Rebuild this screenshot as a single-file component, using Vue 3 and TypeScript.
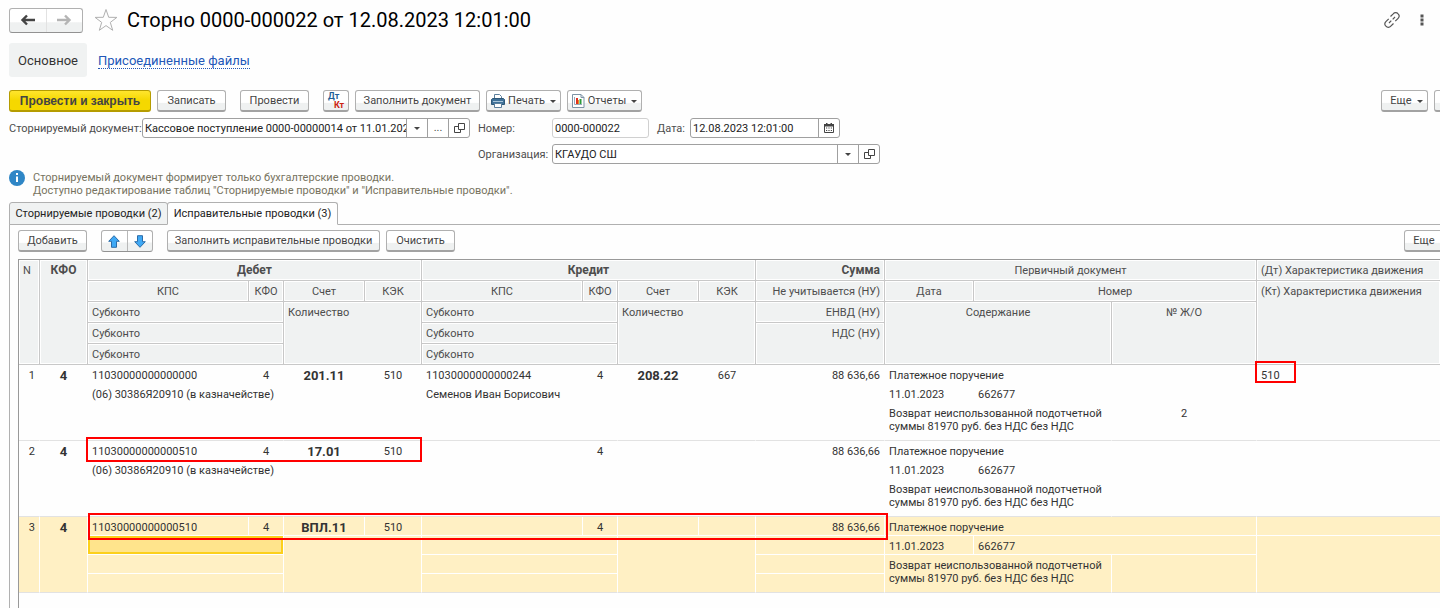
<script setup lang="ts">
import { ref } from 'vue'

interface Side {
  kps: string
  kfo: string
  account: string
  kek: string
  subconto: [string, string, string]
}

interface Entry {
  n: number
  kfo: string
  debit: Side
  credit: Side
  sum: string
  docKind: string
  docDate: string
  docNumber: string
  content: string
  journal: string
  feature: string
  selected: boolean
}

const treasury = '(06) 30386Я20910 (в казначействе)'
const purpose = 'Возврат неиспользованной подотчетной суммы 81970 руб. без НДС без НДС'
const doc = { sum: '88 636,66', docKind: 'Платежное поручение', docDate: '11.01.2023', docNumber: '662677', content: purpose }

const entries: Entry[] = [
  {
    n: 1, kfo: '4', ...doc, journal: '2', feature: '510', selected: false,
    debit: { kps: '11030000000000000', kfo: '4', account: '201.11', kek: '510', subconto: [treasury, '', ''] },
    credit: { kps: '11030000000000244', kfo: '4', account: '208.22', kek: '667', subconto: ['Семенов Иван Борисович', '', ''] },
  },
  {
    n: 2, kfo: '4', ...doc, journal: '', feature: '', selected: false,
    debit: { kps: '11030000000000510', kfo: '4', account: '17.01', kek: '510', subconto: [treasury, '', ''] },
    credit: { kps: '', kfo: '4', account: '', kek: '', subconto: ['', '', ''] },
  },
  {
    n: 3, kfo: '4', ...doc, journal: '', feature: '', selected: true,
    debit: { kps: '11030000000000510', kfo: '4', account: 'ВПЛ.11', kek: '510', subconto: ['', '', ''] },
    credit: { kps: '', kfo: '4', account: '', kek: '', subconto: ['', '', ''] },
  },
]

const source = ref('Кассовое поступление 0000-00000014 от 11.01.202')
const docNo = ref('0000-000022')
const docDate = ref('12.08.2023 12:01:00')
const org = ref('КГАУДО СШ')
</script>

<template>
  <main class="page">
    <header class="head">
      <div class="pair nav">
        <button type="button" aria-label="Назад">
          <svg width="16" height="12" viewBox="0 0 16 12"><path d="M7 1.500 2.500 6 7 10.500M2.500 6H15" fill="none" stroke="#444" stroke-width="2.400" /></svg>
        </button>
        <button type="button" aria-label="Вперед">
          <svg width="16" height="12" viewBox="0 0 16 12"><path d="M9 1.500l4.500 4.500L9 10.500M13.500 6H1" fill="none" stroke="#b4b4b4" stroke-width="2.400" /></svg>
        </button>
      </div>
      <button type="button" class="bare" aria-label="В избранное">
        <svg width="24" height="24" viewBox="0 0 24 24"><path d="M12 1.500l2.700 7.800 8.200.1-6.600 5 2.400 7.900L12 17.600l-6.700 4.700 2.400-7.900-6.600-5 8.200-.1z" fill="none" stroke="#b0b0b0" /></svg>
      </button>
      <h1>Сторно 0000-000022 от 12.08.2023 12:01:00</h1>
      <div class="tools">
        <button type="button" class="bare" aria-label="Ссылка">
          <svg width="18" height="18" viewBox="0 0 18 18" fill="none" stroke="#555" stroke-width="1.200"><path d="M7.500 5.500l2.700-2.700a3.200 3.200 0 0 1 4.900 0a3.200 3.200 0 0 1 0 4.500l-2.800 2.900M10.500 12.500l-2.700 2.700a3.200 3.200 0 0 1-4.900 0a3.200 3.200 0 0 1 0-4.500l2.800-2.900M6 12l2.300-2.300M9.700 8.300L12 6" /></svg>
        </button>
        <button type="button" class="bare" aria-label="Меню">
          <svg width="4" height="14" viewBox="0 0 4 14" fill="#555"><path d="M.5 1.500h3v3h-3zM.5 5.500h3v3h-3zM.5 9.500h3v3h-3z" /></svg>
        </button>
      </div>
    </header>

    <nav class="sections">
      <span class="current">Основное</span>
      <a href="#files">Присоединенные файлы</a>
    </nav>

    <div class="bar main-bar">
      <button type="button" class="btn primary">Провести и закрыть</button>
      <button type="button" class="btn short">Записать</button>
      <button type="button" class="btn short apart">Провести</button>
      <button type="button" class="btn apart dtkt"><span class="dt">Дт</span><span class="kt">Кт</span></button>
      <button type="button" class="btn fill-doc">Заполнить документ</button>
      <button type="button" class="btn menu">
        <svg width="14" height="14" viewBox="0 0 14 14"><path d="M3.500 5V.5h5l2 2V5" fill="#fff" stroke="#5b7f9c" /><path d="M1.500 4.500h11l1 1v5H.5v-5z" fill="#3f7199" stroke="#2f5878" /><path d="M2 7.500h10" stroke="#a9c6da" /><path d="M3.500 9.500h7v4h-7z" fill="#fff" stroke="#5b7f9c" /></svg>
        Печать<i class="caret"></i>
      </button>
      <button type="button" class="btn menu">
        <svg width="13" height="14" viewBox="0 0 13 14"><path d="M.5.5h8.500l3 3v10H.5z" fill="#fff" stroke="#7d93a5" /><path d="M9 .5v3h3" fill="none" stroke="#7d93a5" /><path d="M4 4h2v6H4z" fill="#e0301e" /><path d="M6 6h1v4H6z" fill="#f08a24" /><path d="M7.500 5h2v5h-2z" fill="#2a9a3a" /><path d="M2.500 3v7.500H10" fill="none" stroke="#9ab" /></svg>
        Отчеты<i class="caret"></i>
      </button>
      <div class="right">
        <button type="button" class="btn menu more">Еще<i class="caret"></i></button>
        <button type="button" class="btn help" aria-label="Справка"></button>
      </div>
    </div>

    <form class="fields" @submit.prevent>
      <label for="source">Сторнируемый документ:</label>
      <div class="combo">
        <input id="source" v-model="source" type="text">
        <button type="button" aria-label="Выбрать из списка"><i class="caret"></i></button>
        <button type="button">...</button>
        <button type="button" aria-label="Открыть">
          <svg width="11" height="11" viewBox="0 0 11 11" fill="none" stroke="#444"><path d="M4.500 .5h6v6h-6zM4.500 3.500h-4v6h6v-3" /></svg>
        </button>
      </div>
      <label for="number" class="second-label">Номер:</label>
      <div class="pack">
        <div class="combo number"><input id="number" v-model="docNo" type="text"></div>
        <label for="date">Дата:</label>
        <div class="combo date">
          <input id="date" v-model="docDate" type="text">
          <button type="button" aria-label="Календарь">
            <svg width="10" height="10" viewBox="0 0 10 10"><path d="M.5 1.500h9v8h-9z" fill="none" stroke="#444" /><path d="M0 1h10v2.500H0zM2 0h1.500v2H2zM6.500 0H8v2H6.500z" fill="#444" /><path d="M2 5h6M2 7.500h6" stroke="#444" stroke-dasharray="1.200 1.200" /></svg>
          </button>
        </div>
      </div>
      <label for="org" class="second-label org-label">Организация:</label>
      <div class="combo org">
        <input id="org" v-model="org" type="text">
        <button type="button" aria-label="Выбрать из списка"><i class="caret"></i></button>
        <button type="button" aria-label="Открыть">
          <svg width="11" height="11" viewBox="0 0 11 11" fill="none" stroke="#444"><path d="M4.500 .5h6v6h-6zM4.500 3.500h-4v6h6v-3" /></svg>
        </button>
      </div>
    </form>

    <div class="info">
      <svg width="16" height="16" viewBox="0 0 16 16"><circle cx="8" cy="8" r="8" fill="#2f86c6" /><path d="M7 3h2v2H7zM7 6.500h2V12H7z" fill="#fff" /></svg>
      <p>Сторнируемый документ формирует только бухгалтерские проводки.<br>Доступно редактирование таблиц "Сторнируемые проводки" и "Исправительные проводки".</p>
    </div>

    <div class="tabs" role="tablist">
      <button type="button" role="tab" aria-selected="false">Сторнируемые проводки (2)</button>
      <button type="button" role="tab" aria-selected="true" class="active">Исправительные проводки (3)</button>
    </div>

    <section class="panel">
      <div class="bar">
        <button type="button" class="btn short">Добавить</button>
        <div class="pair move">
          <button type="button" aria-label="Вверх">
            <svg width="12" height="13" viewBox="0 0 12 13"><path d="M6 .7l5.300 5.600H8.500v6h-5v-6H.7z" fill="#3fa9f5" stroke="#2b6ca8" /></svg>
          </button>
          <button type="button" aria-label="Вниз">
            <svg width="12" height="13" viewBox="0 0 12 13"><path d="M6 12.300L.7 6.700h2.800v-6h5v6h2.800z" fill="#3fa9f5" stroke="#2b6ca8" /></svg>
          </button>
        </div>
        <button type="button" class="btn fill-rows">Заполнить исправительные проводки</button>
        <button type="button" class="btn short">Очистить</button>
        <div class="right">
          <button type="button" class="btn menu more">Еще<i class="caret"></i></button>
        </div>
      </div>

      <div class="sheet">
        <table>
          <colgroup>
            <col class="c-n"><col class="c-type">
            <col class="c-kps"><col class="c-kfo"><col class="c-acc"><col class="c-kek">
            <col class="c-kps"><col class="c-kfo"><col class="c-acc"><col class="c-kek">
            <col class="c-sum"><col class="c-date"><col class="c-num"><col class="c-jrn"><col>
          </colgroup>
          <thead>
            <tr>
              <th rowspan="5" class="l">N</th>
              <th rowspan="5" class="b">КФО</th>
              <th colspan="4" class="b">Дебет</th>
              <th colspan="4" class="b">Кредит</th>
              <th class="b r">Сумма</th>
              <th colspan="3">Первичный документ</th>
              <th class="l">(Дт) Характеристика движения</th>
            </tr>
            <tr>
              <template v-for="side in 2" :key="side">
                <th>КПС</th><th>КФО</th><th>Счет</th><th>КЭК</th>
              </template>
              <th class="r">Не учитывается (НУ)</th>
              <th>Дата</th>
              <th colspan="2">Номер</th>
              <th rowspan="4" class="l">(Кт) Характеристика движения</th>
            </tr>
            <tr>
              <template v-for="side in 2" :key="side">
                <th colspan="2" class="l">Субконто</th>
                <th colspan="2" rowspan="3" class="l">Количество</th>
              </template>
              <th class="r">ЕНВД (НУ)</th>
              <th colspan="2" rowspan="3">Содержание</th>
              <th rowspan="3">№ Ж/О</th>
            </tr>
            <tr>
              <th colspan="2" class="l">Субконто</th>
              <th colspan="2" class="l">Субконто</th>
              <th rowspan="2" class="r">НДС (НУ)</th>
            </tr>
            <tr>
              <th colspan="2" class="l">Субконто</th>
              <th colspan="2" class="l">Субконто</th>
            </tr>
          </thead>
          <tbody v-for="e in entries" :key="e.n" :class="{ selected: e.selected }">
            <tr>
              <td rowspan="4" class="r last">{{ e.n }}</td>
              <td rowspan="4" class="c b last">{{ e.kfo }}</td>
              <template v-for="(s, i) in [e.debit, e.credit]" :key="i">
                <td>{{ s.kps }}</td>
                <td class="c">{{ s.kfo }}</td>
                <td class="c b">{{ s.account }}</td>
                <td class="c">{{ s.kek }}</td>
              </template>
              <td class="r">{{ e.sum }}</td>
              <td colspan="3">{{ e.docKind }}</td>
              <td>{{ e.feature }}</td>
            </tr>
            <tr>
              <template v-for="(s, i) in [e.debit, e.credit]" :key="i">
                <td colspan="2" :class="{ cursor: e.selected && i === 0 }">{{ s.subconto[0] }}</td>
                <td colspan="2" rowspan="3" class="last"></td>
              </template>
              <td></td>
              <td>{{ e.docDate }}</td>
              <td colspan="2">{{ e.docNumber }}</td>
              <td rowspan="3" class="last"></td>
            </tr>
            <tr>
              <td colspan="2">{{ e.debit.subconto[1] }}</td>
              <td colspan="2">{{ e.credit.subconto[1] }}</td>
              <td></td>
              <td colspan="2" rowspan="2" class="wrap last">{{ e.content }}</td>
              <td rowspan="2" class="c last">{{ e.journal }}</td>
            </tr>
            <tr>
              <td colspan="2" class="last">{{ e.debit.subconto[2] }}</td>
              <td colspan="2" class="last">{{ e.credit.subconto[2] }}</td>
              <td class="last"></td>
            </tr>
          </tbody>
        </table>
        <span class="mark mark-feature"></span>
        <span class="mark mark-debit"></span>
        <span class="mark mark-entry"></span>
      </div>
    </section>
  </main>
</template>

<style>
html, body { background: #fefefe; }
</style>

<style scoped>
.page {
  box-sizing: border-box;
  display: flex;
  flex-direction: column;
  height: 100vh;
  min-height: 600px;
  padding-left: 9px;
  overflow: hidden;
  color: #444;
  font: 11px/14px Roboto, "Liberation Sans", sans-serif;
}
.page *, .page *::before { box-sizing: border-box; }
button, input { font: inherit; color: inherit; margin: 0; padding: 0; }
svg { display: block; flex: none; }

.head { display: flex; align-items: center; height: 24px; margin-top: 8px; }
.pair {
  display: flex;
  border: 1px solid #b0b0b0;
  border-bottom-color: #929292;
  border-radius: 3px;
  background: linear-gradient(#fff 55%, #eff1f1 60%);
}
.pair button {
  display: flex;
  flex: 1;
  align-items: center;
  justify-content: center;
  border: 0;
  background: none;
}
.pair button + button { border-left: 1px solid #b8b8b8; }
.nav { width: 74px; height: 25px; }
.nav button + button { border-left-color: #e2e2e2; }
.bare { border: 0; background: none; }
.head > .bare { margin-left: 11px; }
h1 {
  margin: 0 0 0 9px;
  color: #000;
  font-size: 20px;
  font-weight: 400;
  line-height: 24px;
}
.tools { display: flex; gap: 19px; align-items: center; margin: 0 16px 0 auto; }

.sections { display: flex; gap: 11px; align-items: center; height: 34px; margin-top: 11px; font-size: 13px; line-height: 16px; }
.current { width: 78px; padding: 10px 0 8px; border-radius: 3px; background: #f0f2f2; color: #333; text-align: center; }
.sections a { padding-top: 2px; border-bottom: 1px dotted #2257b8; color: #2257b8; line-height: 14px; text-decoration: none; }

.bar { display: flex; gap: 6px; height: 22px; }
.main-bar { flex: none; margin-top: 13px; }
.btn {
  display: flex;
  flex: none;
  align-items: center;
  justify-content: center;
  height: 22px;
  padding: 1px 0 0;
  border: 1px solid #b0b0b0;
  border-bottom: 2px solid #a2a2a2;
  border-radius: 3px;
  background: linear-gradient(#fff 60%, #eff1f1 65%);
  white-space: nowrap;
}
.primary {
  width: 142px;
  border-color: #b59c00;
  background: linear-gradient(#ffe52e, #f5d800 50%);
  font-family: "Liberation Sans", Arial, sans-serif;
  font-size: 12px;
  font-weight: 700;
}
.short { width: 69px; }
.fill-doc { width: 125px; }
.fill-rows { width: 213px; }
.apart { margin-left: 8px; }
.menu { gap: 3px; width: 75px; }
.caret { flex: none; border: 3px solid transparent; border-top-color: #444; border-bottom: 0; }
.menu .caret { margin-left: 2px; }
.more { width: 47px; padding-left: 4px; }
.dtkt { flex-direction: column; width: 26px; padding: 0 4px; font-size: 9px; font-weight: 700; line-height: 9px; }
.dt { align-self: flex-start; color: #1f5f96; }
.kt { align-self: flex-end; color: #cc2211; }
.right { display: flex; gap: 6px; margin-left: auto; }
.main-bar .right { margin-right: -18px; }
.help { width: 24px; }

.fields {
  display: grid;
  grid-template-columns: 133px 328px 82px auto;
  row-gap: 6px;
  align-items: center;
  justify-content: start;
  margin-top: 6px;
  color: #4d4d4d;
}
label { padding-top: 1px; }
.second-label { padding-left: 8px; }
.org-label { grid-column: 3; }
.combo { display: flex; height: 20px; border: 1px solid #a0a0a0; border-radius: 3px; background: #fff; overflow: hidden; }
.combo input { flex: 1; min-width: 0; padding: 1px 0 0 2px; border: 0; background: none; color: #222; outline: 0; }
.combo button {
  display: flex;
  flex: none;
  align-items: center;
  justify-content: center;
  width: 21px;
  border: 0;
  border-left: 1px solid #a0a0a0;
  background: none;
}
.pack { display: flex; align-items: center; }
.pack label { width: 41px; padding-left: 8px; }
.number { width: 97px; border-color: #d0d0d0; }
.date { width: 150px; }
.org { width: 328px; }

.info { display: flex; gap: 8px; margin-top: 6px; color: #77735f; }
.info p { margin: 1px 0 0; line-height: 13px; white-space: nowrap; }

.tabs { display: flex; flex: none; height: 23px; margin-top: 5px; border-bottom: 1px solid #b0b0b0; color: #222; }
.tabs button {
  width: 159px;
  height: 23px;
  border: 1px solid #b0b0b0;
  border-radius: 3px 3px 0 0;
  background: #f0f2f2;
  white-space: nowrap;
}
.tabs .active { width: 171px; margin-left: -1px; border-bottom-color: #fefefe; background: #fefefe; }

.panel { display: flex; flex: 1; flex-direction: column; min-height: 0; padding: 5px 0 0 8px; border-left: 1px solid #b0b0b0; }
.panel .bar { flex: none; }
.panel .right { margin-right: -11px; }
.move { width: 52px; height: 22px; margin: 0 8px; }

.sheet { position: relative; flex: 1; margin: 7px -1px 0 0; border-top: 1px solid #999; border-left: 1px solid #999; }
table { width: 100%; border-spacing: 0; table-layout: fixed; color: #333; }
.c-n { width: 21px; }
.c-type { width: 48px; }
.c-kps { width: 161px; }
.c-kfo { width: 35px; }
.c-acc { width: 81px; }
.c-kek { width: 57px; }
.c-sum { width: 129px; }
.c-date { width: 89px; }
.c-num { width: 138px; }
.c-jrn { width: 145px; }
th, td { overflow: hidden; padding: 4px 4px 0; text-align: left; vertical-align: top; white-space: nowrap; }
th {
  height: 21px;
  border-right: 1px solid #c8c8c8;
  border-bottom: 1px solid #c8c8c8;
  background: #f0f2f2;
  box-shadow: inset 0 0 0 1px #fff;
  color: #4d4d4d;
  font-weight: 400;
  text-align: center;
}
td { height: 19px; border-right: 1px solid transparent; border-bottom: 1px solid transparent; }
td.last { border-bottom-color: #e2e2e2; }
.l { text-align: left; }
.r { text-align: right; }
.c { text-align: center; }
.b { font-size: 13px; font-weight: 700; }
th.b { padding-top: 3px; font-size: 12px; }
.wrap { line-height: 13px; white-space: normal; }
.selected td { border-right-color: #fff; background: #fff0c4; border-bottom-color: #fff; }
.selected td.last { border-bottom-color: #e2e2e2; }
.selected td.cursor { background: #ffe48c; box-shadow: inset 0 0 0 2px #fcd01c; }

.mark { position: absolute; border: 2px solid #f00; pointer-events: none; }
.mark-feature { left: 1236px; top: 101px; width: 41px; height: 22px; }
.mark-debit { left: 67px; top: 177px; width: 336px; height: 25px; }
.mark-entry { left: 69px; top: 253px; width: 800px; height: 27px; }
</style>
